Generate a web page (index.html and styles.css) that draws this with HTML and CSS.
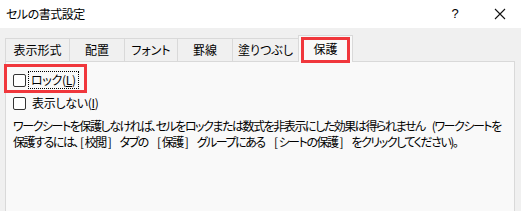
FILE: index.html
```html
<!DOCTYPE html>
<html lang="ja">
<head>
<meta charset="utf-8">
<link rel="stylesheet" href="styles.css">
</head>
<body>
<div class="titlebar">
  <span class="title">セルの書式設定</span>
  <span class="help">?</span>
  <span class="close"><svg width="12" height="12" viewBox="0 0 12 12"><path d="M1 1 L11 11 M11 1 L1 11" stroke="#111" stroke-width="1.1" fill="none"/></svg></span>
</div>
<div class="tabs">
  <div class="tab t1">表示形式</div>
  <div class="tab t2">配置</div>
  <div class="tab t3">フォント</div>
  <div class="tab t4">罫線</div>
  <div class="tab t5">塗りつぶし</div>
  <div class="tab active t6">保護<span class="mark mark-tab"></span></div>
</div>
<div class="panel">
  <div class="row first">
    <span class="box"></span><span class="label focus">ロック(<u>L</u>)</span>
    <span class="mark mark-lock"></span>
  </div>
  <div class="row">
    <span class="box"></span><span class="label">表示しない(<u>I</u>)</span>
  </div>
  <p class="note">ワークシートを保護しなければ、セルをロックまたは数式を非表示にした効果は得られません (ワークシートを<br>保護するには、<span class="br">[</span>校閲<span class="br">]</span> タブの <span class="br">[</span>保護<span class="br">]</span> グループにある <span class="br">[</span>シートの保護<span class="br">]</span> をクリックしてください)。</p>
</div>
</body>
</html>
```
FILE: styles.css
```css
html, body {
  margin: 0;
  padding: 0;
}
body {
  width: 521px;
  height: 211px;
  overflow: hidden;
  background: #f0f0f0;
  color: #000;
  font-family: "Noto Sans CJK JP", "Noto Sans", sans-serif;
  font-size: 12px;
  font-feature-settings: "palt";
  display: flex;
  flex-direction: column;
}
.titlebar {
  height: 28px;
  flex: none;
  background: #fff;
  display: flex;
  align-items: center;
  padding-left: 6px;
  line-height: 16px;
}
.title {
  flex: 1;
  font-size: 12px;
  letter-spacing: -0.5px;
}
.help {
  width: 12px;
  text-align: center;
  margin-right: 33px;
  font-family: "Liberation Sans", sans-serif;
  font-size: 13px;
}
.close {
  display: flex;
  margin-right: 15px;
}
.tabs {
  flex: none;
  height: 33px;
  display: flex;
  align-items: flex-end;
  padding-left: 5px;
  position: relative;
  z-index: 1;
}
.tab {
  box-sizing: border-box;
  height: 23px;
  border: 1px solid #d9d9d9;
  border-bottom: none;
  background: #f0f0f0;
  display: flex;
  align-items: center;
  justify-content: center;
  line-height: 16px;
  padding-bottom: 1px;
  margin-right: -1px;
}
.t1 { width: 65px; }
.t2 { width: 56px; }
.t3 { width: 54px; }
.t4 { width: 56px; }
.t5 { width: 67px; }
.t6 { width: 55px; }
.tab.active {
  height: 27px;
  margin-bottom: -1px;
  background: #f9f9f9;
  position: relative;
  padding-bottom: 0;
}
.mark {
  position: absolute;
  border: 3px solid #f0373c;
  box-sizing: border-box;
}
.mark-tab {
  left: 2px;
  right: 2px;
  top: 1px;
  height: 26px;
}
.panel {
  flex: 1;
  margin: 0 6px 0 5px;
  border: 1px solid #d9d9d9;
  border-bottom: none;
  background: #f9f9f9;
  padding: 10px 7px 0 7px;
}
.row {
  display: flex;
  align-items: center;
  height: 16px;
  line-height: 16px;
  margin-bottom: 7px;
  position: relative;
}
.box {
  box-sizing: border-box;
  width: 13px;
  height: 13px;
  border: 1px solid #333;
  border-radius: 2px;
  background: #fff;
  margin-right: 5px;
}
.label {
  padding: 0 1px;
  letter-spacing: -0.3px;
}
.focus {
  outline: 1px dotted #000;
  outline-offset: 0;
  margin-left: -2px;
  padding: 0 2px;
}
.mark-lock {
  left: -9px;
  top: -8px;
  width: 83px;
  height: 29px;
}
.note {
  margin: 6px 0 0 0;
  line-height: 16px;
  white-space: nowrap;
  letter-spacing: -1.45px;
  word-spacing: 6px;
}
.br {
  margin: 0 2px;
}
u {
  text-decoration: underline;
  text-underline-offset: 1px;
}
```
